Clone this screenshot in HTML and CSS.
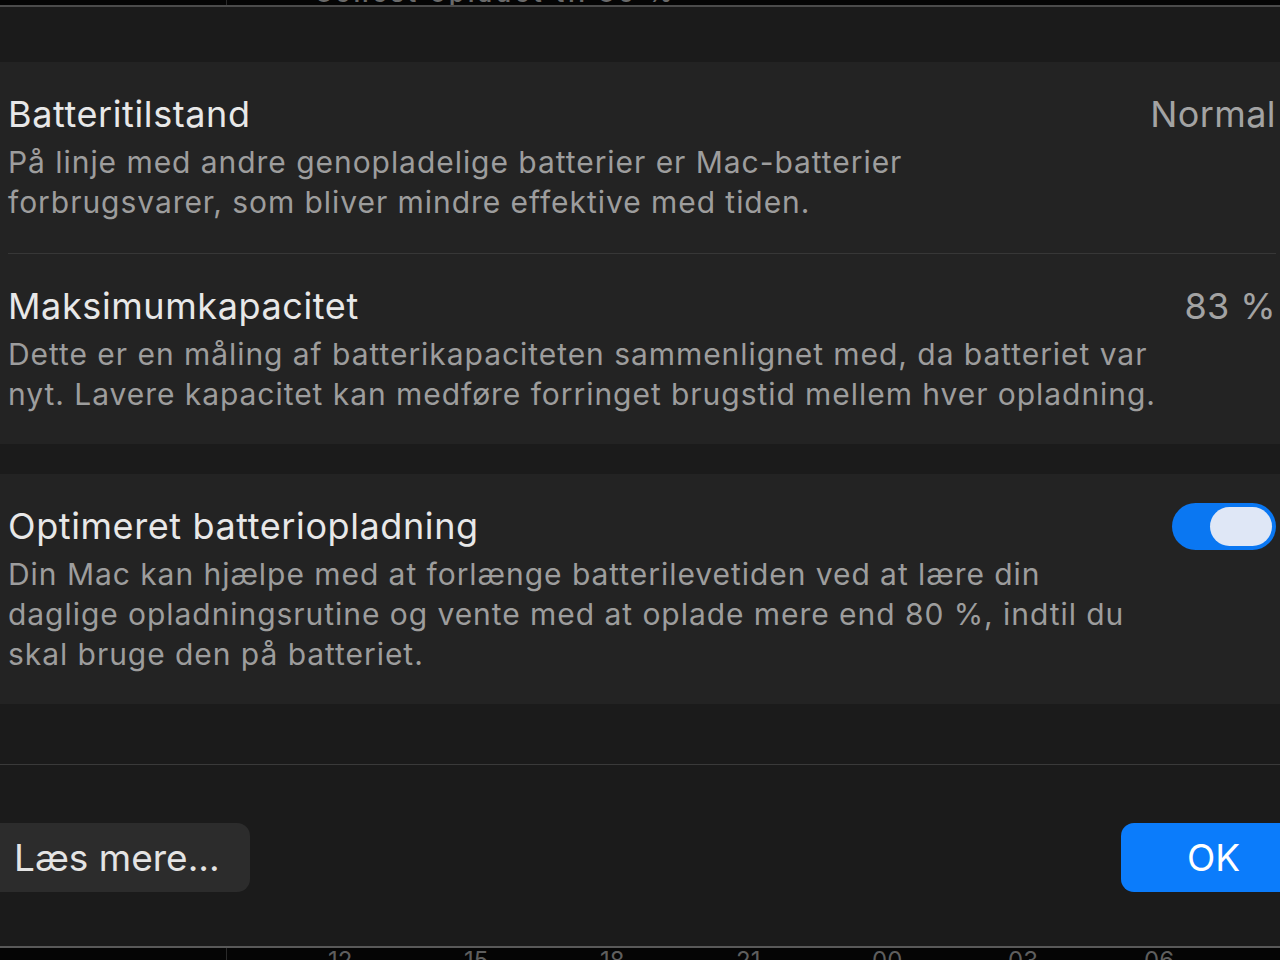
FILE: index.html
```html
<!DOCTYPE html>
<html lang="da">
<head>
<meta charset="utf-8">
<title>Batteri</title>
<link rel="stylesheet" href="styles.css">
</head>
<body>
<div class="strip strip-top">
  <div class="strip-rule"></div>
  <div class="strip-text top-text">Senest opladet til 80 %</div>
</div>
<div class="dialog">
  <section class="card">
    <div class="row">
      <div class="row-main">
        <div class="row-title">Batteritilstand</div>
        <div class="row-desc">På linje med andre genopladelige batterier er Mac-batterier<br>forbrugsvarer, som bliver mindre effektive med tiden.</div>
      </div>
      <div class="row-value">Normal</div>
    </div>
    <div class="row row-divided">
      <div class="row-main">
        <div class="row-title">Maksimumkapacitet</div>
        <div class="row-desc">Dette er en måling af batterikapaciteten sammenlignet med, da batteriet var<br>nyt. Lavere kapacitet kan medføre forringet brugstid mellem hver opladning.</div>
      </div>
      <div class="row-value">83 %</div>
    </div>
  </section>
  <section class="card card-second">
    <div class="row row-last">
      <div class="row-main">
        <div class="row-title">Optimeret batteriopladning</div>
        <div class="row-desc">Din Mac kan hjælpe med at forlænge batterilevetiden ved at lære din<br>daglige opladningsrutine og vente med at oplade mere end 80 %, indtil du<br>skal bruge den på batteriet.</div>
      </div>
      <div class="toggle" role="switch" aria-checked="true"><span class="knob"></span></div>
    </div>
  </section>
  <div class="footer">
    <button class="btn btn-secondary">Læs mere...</button>
    <button class="btn btn-primary">OK</button>
  </div>
</div>
<div class="strip strip-bottom">
  <div class="strip-rule"></div>
  <div class="axis">
    <span>12</span><span>15</span><span>18</span><span>21</span><span>00</span><span>03</span><span>06</span>
  </div>
</div>
</body>
</html>
```

FILE: styles.css
```css
html, body {
  margin: 0;
  padding: 0;
  background: #000;
  width: 1280px;
  height: 960px;
  overflow: hidden;
  font-family: Inter, "Noto Sans", "DejaVu Sans", sans-serif;
  -webkit-font-smoothing: antialiased;
}

.strip {
  position: relative;
  background: #050505;
  overflow: hidden;
}

.strip-top {
  height: 5px;
}

.strip-bottom {
  height: 12px;
}

.strip-rule {
  position: absolute;
  left: 226px;
  top: 0;
  bottom: 0;
  width: 1px;
  background: #2a2a2a;
}

.top-text {
  margin-top: -17px;
  margin-left: 316px;
  font-size: 24px;
  line-height: 22px;
  color: #6a6a6a;
  font-weight: 600;
  letter-spacing: 4px;
}

.axis {
  display: flex;
  margin-left: 328px;
  font-size: 24px;
  line-height: 24px;
  color: #5e5e5e;
  margin-top: 1px;
}

.axis span {
  width: 151px;
}

.dialog {
  height: 943px;
  background: #1b1b1b;
  border-top: 2px solid #4b4b4b;
  border-bottom: 2px solid #595959;
  padding-top: 55px;
  box-sizing: border-box;
  display: flex;
  flex-direction: column;
}

.card {
  background: #232323;
  padding: 0 4px 0 8px;
}

.card-second {
  margin-top: 30px;
}

.row {
  display: flex;
  align-items: flex-start;
  justify-content: space-between;
  padding: 27px 0 31px;
}

.row-divided {
  border-top: 1px solid #373737;
  padding-bottom: 30px;
}

.row-last {
  padding-bottom: 30px;
}

.row-title {
  font-size: 36px;
  line-height: 51px;
  margin-bottom: 2px;
  color: #e8e8e8;
  letter-spacing: 0.6px;
}

.row-desc {
  font-size: 30px;
  line-height: 40px;
  color: #9d9d9d;
  letter-spacing: 0.95px;
}

.row-value {
  font-size: 36px;
  line-height: 51px;
  color: #a3a3a3;
  letter-spacing: 0.4px;
}

.toggle {
  margin-top: 2px;
  width: 104px;
  height: 47px;
  border-radius: 24px;
  background: #0a77f2;
  display: flex;
  align-items: center;
  justify-content: flex-end;
  padding: 0 4px;
  box-sizing: border-box;
}

.knob {
  width: 62px;
  height: 39px;
  border-radius: 20px;
  background: #dfe7f6;
}

.footer {
  margin-top: 60px;
  border-top: 1px solid #3a3a3a;
  padding-top: 58px;
  display: flex;
  justify-content: space-between;
}

.btn {
  font-family: inherit;
  font-size: 37px;
  height: 69px;
  border: none;
  border-radius: 13px;
  padding: 0;
}

.btn-secondary {
  width: 250px;
  background: #2c2c2c;
  color: #e4e4e4;
  text-align: left;
  padding-left: 14px;
  border-top-left-radius: 0;
  border-bottom-left-radius: 0;
}

.btn-primary {
  width: 159px;
  background: #0b7cfb;
  color: #fff;
  text-align: left;
  padding-left: 66px;
  border-top-right-radius: 0;
  border-bottom-right-radius: 0;
}
```
